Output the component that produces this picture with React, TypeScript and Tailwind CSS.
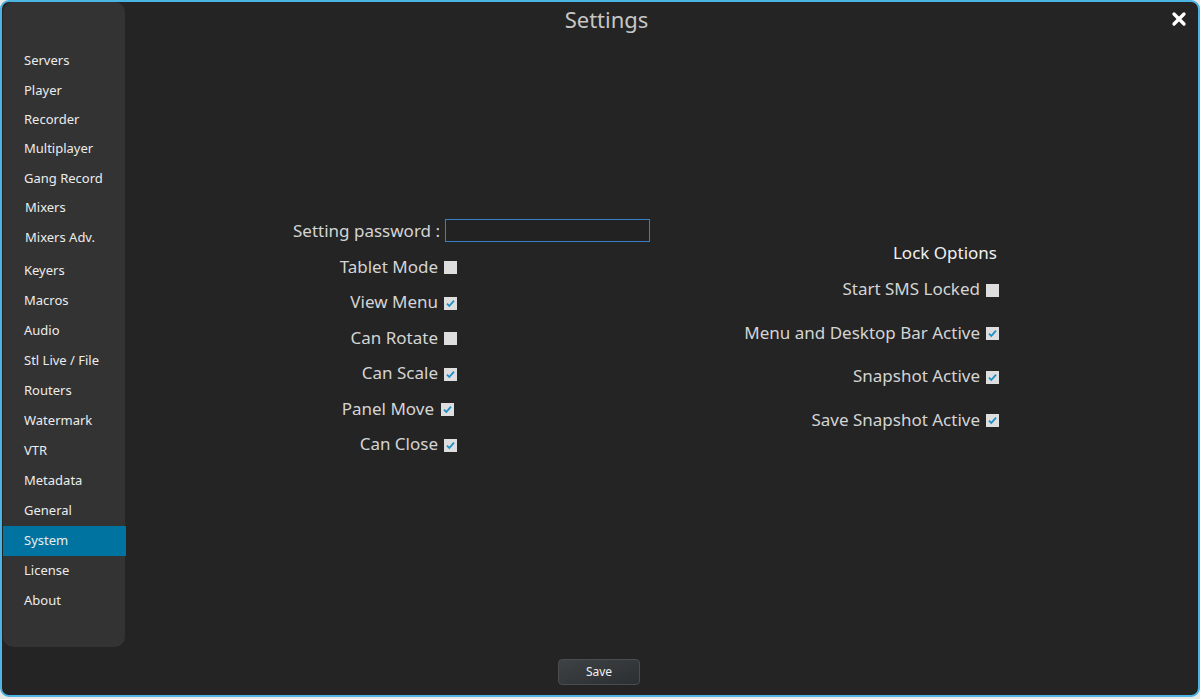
import { X } from "lucide-react";

type NavItem = { label: string; h: string; pl?: string };

const navItems: NavItem[] = [
  { label: "Servers", h: "h-[30px]" },
  { label: "Player", h: "h-[30px]" },
  { label: "Recorder", h: "h-[28px]" },
  { label: "Multiplayer", h: "h-[30px]" },
  { label: "Gang Record", h: "h-[29px]" },
  { label: "Mixers", h: "h-[30px]", pl: "pl-[22px]" },
  { label: "Mixers Adv.", h: "h-[30px] mb-[3px]", pl: "pl-[22px]" },
  { label: "Keyers", h: "h-[30px]" },
  { label: "Macros", h: "h-[30px]" },
  { label: "Audio", h: "h-[30px]" },
  { label: "Stl Live / File", h: "h-[30px]" },
  { label: "Routers", h: "h-[30px]" },
  { label: "Watermark", h: "h-[30px]" },
  { label: "VTR", h: "h-[30px]" },
  { label: "Metadata", h: "h-[30px]" },
  { label: "General", h: "h-[30px]" },
  { label: "System", h: "h-[30px]" },
  { label: "License", h: "h-[30px]" },
  { label: "About", h: "h-[30px]" },
];

function Checkbox({ checked }: { checked: boolean }) {
  return (
    <span className="w-[13px] h-[13px] bg-[#dedede] flex items-center justify-center shrink-0 mt-[3px]">
      {checked && (
        <svg width="11" height="11" viewBox="0 0 11 11">
          <path d="M2 5.6 L4.3 8 L9 2.6" fill="none" stroke="#1c8ec6" strokeWidth="1.8" />
        </svg>
      )}
    </span>
  );
}

const leftRows = [
  { label: "Tablet Mode", checked: false, shifted: false },
  { label: "View Menu", checked: true, shifted: false },
  { label: "Can Rotate", checked: false, shifted: false },
  { label: "Can Scale", checked: true, shifted: false },
  { label: "Panel Move", checked: true, shifted: true },
  { label: "Can Close", checked: true, shifted: false },
];

const lockRows = [
  { label: "Start SMS Locked", checked: false },
  { label: "Menu and Desktop Bar Active", checked: true },
  { label: "Snapshot Active", checked: true },
  { label: "Save Snapshot Active", checked: true },
];

export default function App() {
  const font = { fontFamily: '"Noto Sans", "Open Sans", sans-serif' };
  return (
    <div className="w-[1200px] h-[699px] bg-[#e8e8e8]" style={font}>
      <div className="h-[697px] border-2 border-[#4cb4e2] rounded-[9px] bg-[#242424] flex flex-col overflow-hidden">
        <div className="flex h-[645px]">
          {/* Sidebar */}
          <div className="w-[122px] ml-[1px] h-[645px] bg-[#333333] rounded-[10px] pt-[44px]">
            {navItems.map((item) => (
              <div
                key={item.label}
                className={`${item.h} flex items-center ${item.pl ?? "pl-[21px]"} text-[13px] text-[#ececec] ${
                  item.label === "System" ? "bg-[#0073a0] -mr-[1px]" : ""
                }`}
              >
                {item.label}
              </div>
            ))}
          </div>

          {/* Main */}
          <div className="flex-1 flex flex-col">
            <div className="flex items-center h-[34px]">
              <div className="flex-1 text-center pr-[79px] text-[22px] text-[#c6c6c6]">Settings</div>
              <div className="w-[31px] flex items-center pl-[2px]">
                <X size={20} strokeWidth={4} color="#ffffff" />
              </div>
            </div>

            <div className="flex items-start">
              {/* Left column */}
              <div className="ml-[155px] mt-[177px] flex flex-col">
                <div className="h-[35.5px] flex items-center">
                  <span className="w-[160px] text-right text-[17px] text-[#d4d4d4] whitespace-nowrap">Setting password :</span>
                  <input
                    className="ml-[5px] w-[205px] h-[23px] border border-[#3b7fc2] bg-[#222] outline-none"
                    type="password"
                  />
                </div>
                {leftRows.map((r) => (
                  <div key={r.label} className="h-[35.5px] flex items-center">
                    <div className={`${r.shifted ? "w-[154px]" : "w-[158px]"} flex justify-end`}>
                      <span className="text-[17px] text-[#d4d4d4] whitespace-nowrap">{r.label}</span>
                    </div>
                    <div className={r.shifted ? "ml-[7px]" : "ml-[6px]"}>
                      <Checkbox checked={r.checked} />
                    </div>
                  </div>
                ))}
              </div>

              {/* Right column */}
              <div className="ml-[71px] mt-[203px] w-[278px] flex flex-col items-end">
                <div className="h-[28px] flex items-center pr-[2px] text-[17px] text-[#f0f0f0]">Lock Options</div>
                {lockRows.map((r) => (
                  <div key={r.label} className="h-[43.5px] flex items-center">
                    <span className="text-[17px] text-[#d4d4d4] whitespace-nowrap">{r.label}</span>
                    <div className="ml-[6px]">
                      <Checkbox checked={r.checked} />
                    </div>
                  </div>
                ))}
              </div>
            </div>
          </div>
        </div>

        {/* Footer */}
        <div className="flex justify-center pt-[12px]">
          <button className="w-[82px] h-[26px] rounded-[4px] border border-[#4a4d50] bg-gradient-to-br from-[#3e4245] to-[#2c2f32] text-[12px] text-[#f0f0f0] ml-[-2px]">
            Save
          </button>
        </div>
      </div>
    </div>
  );
}
